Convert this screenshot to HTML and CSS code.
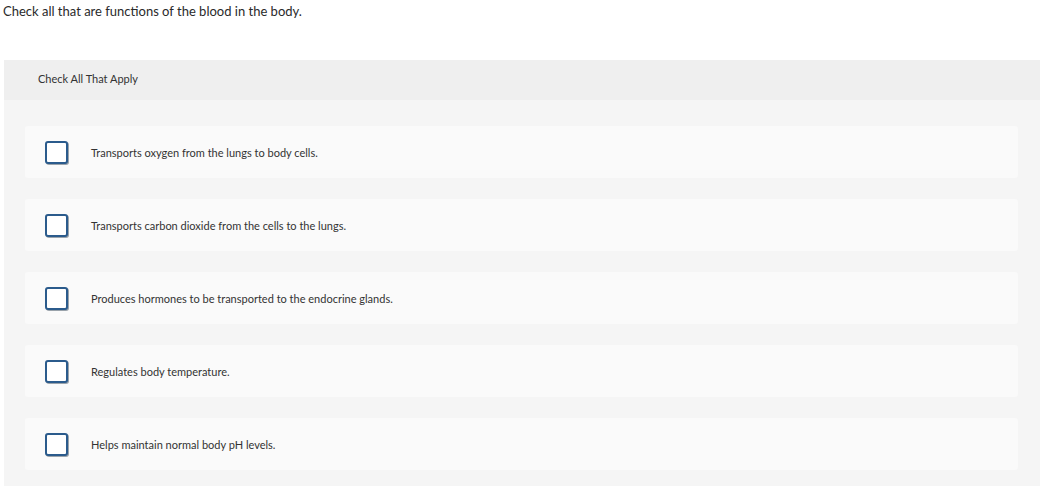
FILE: index.html
```html
<!DOCTYPE html>
<html>
<head>
<meta charset="utf-8">
<link rel="stylesheet" href="styles.css">
</head>
<body>
<p class="question">Check all that are functions of the blood in the body.</p>
<div class="panel">
  <div class="panel-head">Check All That Apply</div>
  <div class="panel-body">
    <div class="item"><span class="box"></span><span class="label">Transports oxygen from the lungs to body cells.</span></div>
    <div class="item"><span class="box"></span><span class="label">Transports carbon dioxide from the cells to the lungs.</span></div>
    <div class="item"><span class="box"></span><span class="label">Produces hormones to be transported to the endocrine glands.</span></div>
    <div class="item"><span class="box"></span><span class="label">Regulates body temperature.</span></div>
    <div class="item"><span class="box"></span><span class="label">Helps maintain normal body pH levels.</span></div>
  </div>
</div>
</body>
</html>
```
FILE: styles.css
```css
html, body { margin: 0; padding: 0; background: #fff; }
body { font-family: Lato, "Open Sans", sans-serif; color: #333; }
.question {
  margin: 0;
  padding: 3px 0 0 3px;
  font-size: 13px;
  line-height: 16px;
  color: #2a2a2a;
}
.panel {
  margin: 41px 10px 0 4px;
  width: 1036px;
  background: #f5f5f5;
}
.panel-head {
  height: 36px;
  padding-bottom: 4px;
  background: #efefef;
  padding-left: 34px;
  display: flex;
  align-items: center;
  font-size: 11px;
  color: #333;
}
.panel-body {
  padding: 26px 22px 16px 21px;
  display: flex;
  flex-direction: column;
  gap: 21px;
}
.item {
  height: 52px;
  background: #fafafa;
  border-radius: 3px;
  display: flex;
  align-items: center;
  padding-left: 20px;
}
.box {
  width: 19px;
  height: 19px;
  border: 2px solid #2b5b8c;
  border-radius: 3px;
  background: #fff;
  box-shadow: 1px 1px 0 #9aa3ab;
  flex: none;
}
.label {
  margin-left: 23px;
  font-size: 11px;
  color: #333;
}
```
